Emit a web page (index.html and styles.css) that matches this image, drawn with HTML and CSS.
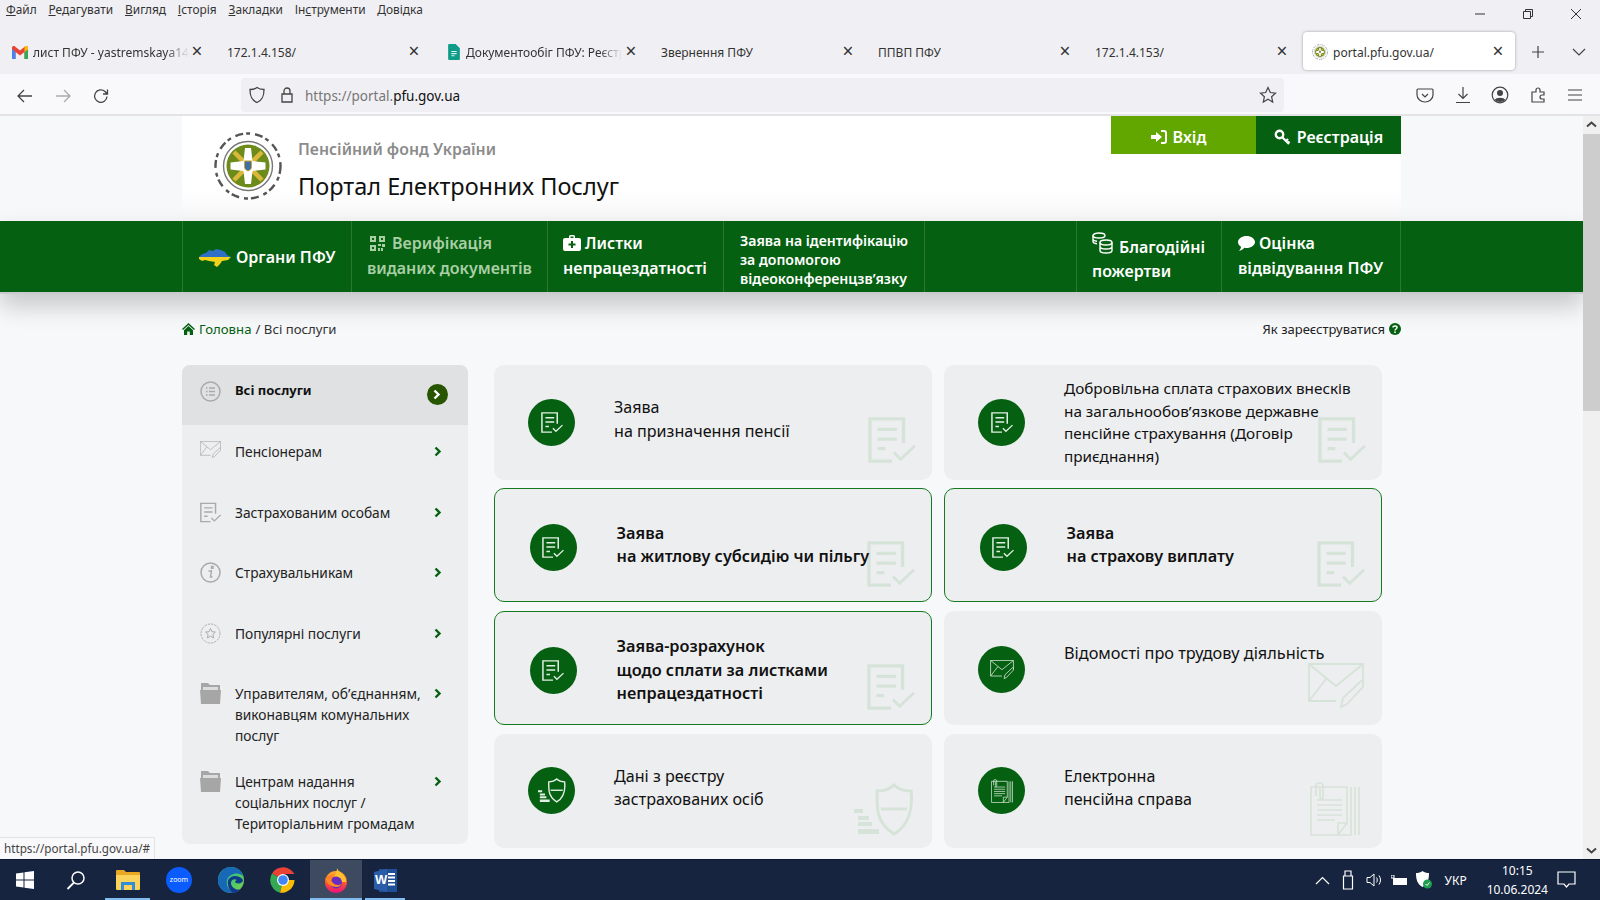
FILE: index.html
```html
<!DOCTYPE html>
<html lang="uk">
<head>
<meta charset="utf-8">
<title>Портал Електронних Послуг</title>
<link rel="stylesheet" href="styles.css">
</head>
<body>
<svg class="defs" width="0" height="0" aria-hidden="true">
  <defs>
    <symbol id="i-doc" viewBox="0 0 50 48"><g fill="none" stroke="currentColor" stroke-width="3.4"><path d="M37 27V2H2v44h23"/><path d="M10 13h20M10 23h20M10 33h8"/><path d="M27 37l7 7 15-14" stroke-width="3"/></g></symbol>
    <symbol id="i-mail" viewBox="0 0 56 45"><g fill="none" stroke="currentColor" stroke-width="1.8"><path d="M28 38H1V1h54v22"/><path d="M1 1l27 22L55 1M1 38l17-22"/><path d="M33 44l2-9 17-16c2-2 4-1 4 1s0 3-1 4L39 41z"/></g></symbol>
    <symbol id="i-shield" viewBox="0 0 60 53"><g fill="none" stroke="currentColor"><path d="M40 2c4 4 10 6 17 6 2 17-2 34-17 43-8-5-14-12-16-22-1-6-1-14-1-21 7 0 13-2 17-6z" stroke-width="3"/><path d="M27 26h26" stroke-width="3"/></g><path d="M0 26h9v4H0zM4 33h11v4H4zM4 39h14v4H4zM4 46h21v5H4z" fill="currentColor"/></symbol>
    <symbol id="i-file" viewBox="0 0 50 54"><g fill="none" stroke="currentColor" stroke-width="1.6"><path d="M1 5h36v36L28 53H1z"/><path d="M28 53V41h9M41 5v48H28M45 5v48M49 5v48"/><path d="M7 18h25M7 23h25M7 28h25M7 33h25M7 38h18"/><path d="M6 14V4c0-4 7-4 7 0v11c0 3-3 3-3 0V6"/></g></symbol>
    <symbol id="i-logo" viewBox="0 0 70 70">
      <circle cx="35" cy="35" r="32.500" fill="none" stroke="#555" stroke-width="2.400" stroke-dasharray="8 3 4 5"/>
      <circle cx="35" cy="35" r="24.500" fill="#fff" stroke="#777" stroke-width="1.400"/>
      <circle cx="35" cy="35" r="21.500" fill="#6c8b1b"/>
      <path d="M21 21l28 28M49 21L21 49" stroke="#dcb83a" stroke-width="4.500"/>
      <path d="M32 17h6l1.500 13 13 1.500v7L39.500 40 38 53h-6l-1.500-13-13-1.500v-7l13-1.500z" fill="#fff"/>
      <path d="M31.500 30h7v6c0 2-1.500 3-3.500 4-2-1-3.500-2-3.500-4z" fill="#3f6fa8" stroke="#c9a528"/>
    </symbol>
  </defs>
</svg>
<div class="window">
  <div class="menubar">
    <nav class="menu">
      <span><u>Ф</u>айл</span><span><u>Р</u>едагувати</span><span><u>В</u>игляд</span><span><u>І</u>сторія</span><span><u>З</u>акладки</span><span>Ін<u>с</u>трументи</span><span><u>Д</u>овідка</span>
    </nav>
    <div class="winctl">
      <svg width="12" height="12" viewBox="0 0 12 12"><path d="M1 6h10" stroke="#333" fill="none"/></svg>
      <svg width="12" height="12" viewBox="0 0 12 12"><path d="M1.500 3.500h7v7h-7zM3.500 3.500v-2h7v7h-2" stroke="#333" fill="none"/></svg>
      <svg width="12" height="12" viewBox="0 0 12 12"><path d="M1 1l10 10M11 1L1 11" stroke="#333" fill="none"/></svg>
    </div>
  </div>
  <div class="tabbar">
    <div class="tab">
      <svg class="fav" width="16" height="13" viewBox="0 0 16 13"><path d="M0 2v11h3.500V6L8 9.500 12.500 6v7H16V2c0-2-2-2.500-3-1.500L8 4.500 3 .5C2-.5 0 0 0 2z" fill="#ea4335"/><path d="M0 3v10h3.500V6z" fill="#4285f4"/><path d="M16 3v10h-3.500V6z" fill="#34a853"/><path d="M16 2c0-2-2-2.500-3-1.500L12.500 1v5L16 3.500z" fill="#fbbc04"/></svg>
      <span class="tab-t tab-t-icon1">лист ПФУ - yastremskaya14(</span><i class="x">×</i>
    </div>
    <div class="tab"><span class="tab-t">172.1.4.158/</span><i class="x">×</i></div>
    <div class="tab">
      <svg class="fav fav3" width="12" height="16" viewBox="0 0 11 15"><path d="M1 0h6l4 4v10a1 1 0 0 1-1 1H1a1 1 0 0 1-1-1V1a1 1 0 0 1 1-1z" fill="#0f9d8a"/><path d="M3 7h5M3 9h5M3 11h3" stroke="#d9f2ee"/></svg>
      <span class="tab-t tab-t-icon3">Документообіг ПФУ: Реєстр</span><i class="x">×</i>
    </div>
    <div class="tab"><span class="tab-t">Звернення ПФУ</span><i class="x">×</i></div>
    <div class="tab"><span class="tab-t">ППВП ПФУ</span><i class="x">×</i></div>
    <div class="tab"><span class="tab-t">172.1.4.153/</span><i class="x">×</i></div>
    <div class="tab tab-on">
      <svg class="fav" width="16" height="16"><use href="#i-logo"/></svg>
      <span class="tab-t">portal.pfu.gov.ua/</span><i class="x">×</i>
    </div>
    <svg class="tb-plus" width="14" height="14" viewBox="0 0 14 14"><path d="M7 1v12M1 7h12" stroke="#444" stroke-width="1.200" fill="none"/></svg>
    <svg class="tb-chev" width="14" height="14" viewBox="0 0 14 14"><path d="M1 4l6 6 6-6" stroke="#444" stroke-width="1.200" fill="none"/></svg>
  </div>
  <div class="toolbar">
    <div class="nav-btns">
      <svg width="18" height="18" viewBox="0 0 18 18"><path d="M16 9H2M8 3L2 9l6 6" stroke="#444" stroke-width="1.300" fill="none"/></svg>
      <svg width="18" height="18" viewBox="0 0 18 18"><path d="M2 9h14M10 3l6 6-6 6" stroke="#aaa" stroke-width="1.300" fill="none"/></svg>
      <svg width="18" height="18" viewBox="0 0 18 18"><path d="M15 9.500A6.200 6.200 0 1 1 13 4.500L15.500 7M15.500 2.500V7H11" stroke="#444" stroke-width="1.300" fill="none"/></svg>
    </div>
    <div class="urlbar">
      <svg width="18" height="18" viewBox="0 0 18 18"><path d="M9 1.500c2 1.500 4.500 2 7 2 0 6-1 10.500-7 13-6-2.500-7-7-7-13 2.500 0 5-.5 7-2z" stroke="#444" stroke-width="1.300" fill="none"/></svg>
      <svg width="16" height="18" viewBox="0 0 16 18"><path d="M3 8h10v8H3zM5 8V5a3 3 0 0 1 6 0v3" stroke="#444" stroke-width="1.300" fill="none"/></svg>
      <span class="url"><span class="url-dim">https://portal.</span>pfu.gov.ua</span>
      <svg class="star" width="18" height="18" viewBox="0 0 18 18"><path d="M9 1.500l2.300 5 5.200.6-3.900 3.600 1.100 5.300L9 13.300 4.300 16l1.100-5.300L1.500 7.100l5.200-.6z" stroke="#444" stroke-width="1.200" fill="none"/></svg>
    </div>
    <div class="tool-icons">
      <svg width="18" height="18" viewBox="0 0 18 18"><path d="M2 3h14a1 1 0 0 1 1 1v5c0 4-4 7-8 7s-8-3-8-7V4a1 1 0 0 1 1-1zM6 8l3 3 3-3" stroke="#444" stroke-width="1.200" fill="none"/></svg>
      <svg width="18" height="18" viewBox="0 0 18 18"><path d="M9 1v11M4.500 8L9 12.500 13.500 8M2 16.500h14" stroke="#444" stroke-width="1.200" fill="none"/></svg>
      <svg width="18" height="18" viewBox="0 0 18 18"><circle cx="9" cy="9" r="7.800" stroke="#444" stroke-width="1.200" fill="none"/><circle cx="9" cy="7" r="3" fill="#444"/><path d="M3.800 14c1-3 9.400-3 10.400 0-3 2.500-7.400 2.500-10.400 0z" fill="#444"/></svg>
      <svg width="18" height="18" viewBox="0 0 18 18"><path d="M3 16V6h4V4a2 2 0 0 1 4 0v2h4v3h-2a2 2 0 0 0 0 4h2v3z" stroke="#444" stroke-width="1.200" fill="none"/></svg>
      <svg width="18" height="18" viewBox="0 0 18 18"><path d="M2 4h14M2 9h14M2 14h14" stroke="#444" stroke-width="1.200" fill="none"/></svg>
    </div>
  </div>
  <div class="viewport">
    <main class="page">
      <header class="site">
        <div class="brand">
          <svg class="logo" width="70" height="70"><use href="#i-logo"/></svg>
          <div class="brand-t">
            <div class="brand-sub">Пенсійний фонд України</div>
            <div class="brand-main">Портал Електронних Послуг</div>
          </div>
        </div>
        <div class="auth">
          <a class="auth-in">
            <svg width="16" height="16" viewBox="0 0 16 16"><path d="M0 6h5V3l6 5-6 5v-3H0zM10 1h3a3 3 0 0 1 3 3v8a3 3 0 0 1-3 3h-3v-2h3a1 1 0 0 0 1-1V4a1 1 0 0 0-1-1h-3z" fill="#fff"/></svg>
            Вхід</a>
          <a class="auth-reg">
            <svg width="17" height="17" viewBox="0 0 17 17"><circle cx="5.500" cy="5.500" r="3.700" stroke="#fff" stroke-width="2.400" fill="none"/><path d="M8 8l7 7M12 12l2-2M14 14l1.500-1.500" stroke="#fff" stroke-width="2.200" fill="none"/></svg>
            Реєстрація</a>
        </div>
      </header>
      <div class="navband">
        <nav class="mainnav">
          <a class="ni ni-org">
            <svg width="32" height="21" viewBox="0 0 32 21"><path d="M0 10c2-2 4-4 7-4l3-3 4 1 3-2 5 1 4 2 2 3 4 2H0z" fill="#2f6fc6"/><path d="M0 10h32l-3 3-6 1-2 3-3 3-3-2 1-3-6-1-4-1-3 1-3-2z" fill="#f2d21a"/></svg>
            <span>Органи ПФУ</span>
          </a>
          <a class="ni ni-ver">
            <span class="ln"><svg width="15" height="15" viewBox="0 0 15 15"><path d="M0 0h6v6H0zM9 0h6v6H9zM0 9h6v6H0zM2 2v2h2V2zM11 2v2h2V2zM2 11v2h2v-2zM8 8h3v2H8zM12 8h3v3h-3zM8 12h2v3H8zM11 12h2v3h-2z" fill="#a9cfa5" fill-rule="evenodd"/></svg><b>Верифікація</b></span>
            <span class="ln">виданих документів</span>
          </a>
          <a class="ni ni-lis">
            <span class="ln"><svg width="18" height="16" viewBox="0 0 18 16"><path d="M6 3V1.500A1.500 1.500 0 0 1 7.500 0h3A1.500 1.500 0 0 1 12 1.500V3h4a2 2 0 0 1 2 2v9a2 2 0 0 1-2 2H2a2 2 0 0 1-2-2V5a2 2 0 0 1 2-2zM7.500 1.500V3h3V1.500zM8 6v2.500H5.500v2H8V13h2v-2.500h2.500v-2H10V6z" fill="#fff" fill-rule="evenodd"/></svg>Листки</span>
            <span class="ln">непрацездатності</span>
          </a>
          <a class="ni ni-id">Заява на ідентифікацію<br>за допомогою<br>відеоконференцзв’язку</a>
          <div class="ni ni-blank"></div>
          <a class="ni ni-don">
            <span class="ln ln-coin"><svg width="21" height="22" viewBox="0 0 21 22"><g fill="none" stroke="#fff" stroke-width="1.400"><ellipse cx="7" cy="3.500" rx="6" ry="2.500"/><path d="M1 3.500v6c0 1 1.500 2 4 2.300M1 7c0 1 1.500 2 4 2.300"/><ellipse cx="14" cy="10.500" rx="6" ry="2.500"/><path d="M8 10.500v8c0 1.500 2.500 2.500 6 2.500s6-1 6-2.500v-8M8 14.500c0 1.500 2.500 2.500 6 2.500s6-1 6-2.500"/></g></svg><span>Благодійні</span></span>
            <span class="ln">пожертви</span>
          </a>
          <a class="ni ni-rate">
            <span class="ln"><svg width="17" height="15" viewBox="0 0 17 15"><path d="M8.500 0C13 0 17 2.700 17 6s-4 6-8.500 6c-.8 0-1.500-.1-2.200-.2C5 13.500 3 14.500 1 15c1-1 2-2.500 2-4.200C1.200 9.700 0 8 0 6c0-3.300 4-6 8.500-6z" fill="#fff"/></svg>Оцінка</span>
            <span class="ln">відвідування ПФУ</span>
          </a>
        </nav>
      </div>
      <div class="content">
        <div class="crumbs">
          <div class="crumb-l">
            <svg width="13" height="12" viewBox="0 0 13 12"><path d="M6.500 0L13 6l-1 1-5.500-5L1 7 0 6zM2 7.200L6.500 3 11 7.200V12H7.800V8.500H5.200V12H2z" fill="#056011"/></svg>
            <a class="crumb-a">Головна</a> / Всі послуги
          </div>
          <div class="crumb-r">Як зареєструватися
            <svg width="12" height="12" viewBox="0 0 12 12"><circle cx="6" cy="6" r="6" fill="#056011"/><path d="M4 4.600C4 2.500 8 2.500 8 4.600 8 6 6 6 6 7.500" stroke="#fff" stroke-width="1.500" fill="none"/><path d="M5.200 8.500h1.600V10H5.200z" fill="#fff"/></svg>
          </div>
        </div>
        <div class="columns">
          <aside class="side">
            <a class="si si-on">
              <svg class="si-ic" width="21" height="21" viewBox="0 0 21 21"><circle cx="10.500" cy="10.500" r="9.500" stroke="#aaa" stroke-width="1.500" fill="none"/><path d="M9 7h6M9 10.500h6M9 14h6M6 7h1.500M6 10.500h1.500M6 14h1.500" stroke="#aaa" stroke-width="1.300"/></svg>
              <span class="si-t si-t-b">Всі послуги</span>
              <span class="si-round"><svg width="9" height="11" viewBox="0 0 9 11"><path d="M1.500 1.500l4 4-4 4" stroke="#fff" stroke-width="2.400" fill="none"/></svg></span>
            </a>
            <a class="si">
              <svg class="si-ic" width="21" height="17" viewBox="0 0 56 45"><use href="#i-mail"/></svg>
              <span class="si-t">Пенсіонерам</span>
              <svg class="si-ar" width="8" height="11" viewBox="0 0 8 11"><path d="M1.500 1.500l4 4-4 4" stroke="#056011" stroke-width="2.400" fill="none"/></svg>
            </a>
            <a class="si">
              <svg class="si-ic" width="21" height="21" viewBox="0 0 50 48"><use href="#i-doc"/></svg>
              <span class="si-t">Застрахованим особам</span>
              <svg class="si-ar" width="8" height="11" viewBox="0 0 8 11"><path d="M1.500 1.500l4 4-4 4" stroke="#056011" stroke-width="2.400" fill="none"/></svg>
            </a>
            <a class="si">
              <svg class="si-ic" width="21" height="21" viewBox="0 0 21 21"><circle cx="10.500" cy="10.500" r="9.500" stroke="#aaa" stroke-width="1.500" fill="none"/><path d="M11.500 4.500h1.500V6.200h-1.500zM8.500 9h3l-1 6h2" stroke="#aaa" stroke-width="1.400" fill="none"/></svg>
              <span class="si-t">Страхувальникам</span>
              <svg class="si-ar" width="8" height="11" viewBox="0 0 8 11"><path d="M1.500 1.500l4 4-4 4" stroke="#056011" stroke-width="2.400" fill="none"/></svg>
            </a>
            <a class="si">
              <svg class="si-ic" width="21" height="21" viewBox="0 0 21 21"><circle cx="10.500" cy="10.500" r="9.500" stroke="#aaa" stroke-dasharray="2 1" fill="none"/><path d="M10.500 5.500l1.500 3.200 3.400.4-2.500 2.400.7 3.400-3.100-1.700-3.100 1.700.7-3.400-2.500-2.400 3.400-.4z" stroke="#aaa" fill="none"/></svg>
              <span class="si-t">Популярні послуги</span>
              <svg class="si-ar" width="8" height="11" viewBox="0 0 8 11"><path d="M1.500 1.500l4 4-4 4" stroke="#056011" stroke-width="2.400" fill="none"/></svg>
            </a>
            <a class="si si-tall">
              <svg class="si-ic" width="21" height="21" viewBox="0 0 21 21"><path d="M1 0h7l2 2h10v5H1z" fill="#a6a6a6"/><path d="M3 4h15v3H3z" fill="#ddd"/><path d="M0 7h21l-1 14H1z" fill="#a6a6a6"/></svg>
              <span class="si-t">Управителям, об’єднанням,<br>виконавцям комунальних<br>послуг</span>
              <svg class="si-ar" width="8" height="11" viewBox="0 0 8 11"><path d="M1.500 1.500l4 4-4 4" stroke="#056011" stroke-width="2.400" fill="none"/></svg>
            </a>
            <a class="si si-tall">
              <svg class="si-ic" width="21" height="21" viewBox="0 0 21 21"><path d="M1 0h7l2 2h10v5H1z" fill="#a6a6a6"/><path d="M3 4h15v3H3z" fill="#ddd"/><path d="M0 7h21l-1 14H1z" fill="#a6a6a6"/></svg>
              <span class="si-t">Центрам надання<br>соціальних послуг /<br>Територіальним громадам</span>
              <svg class="si-ar" width="8" height="11" viewBox="0 0 8 11"><path d="M1.500 1.500l4 4-4 4" stroke="#056011" stroke-width="2.400" fill="none"/></svg>
            </a>
          </aside>
          <section class="cards">
            <a class="card">
              <span class="disc"><svg width="22" height="21"><use href="#i-doc"/></svg></span>
              <span class="card-t card-t-up">Заява<br>на призначення пенсії</span>
              <svg class="mark mark-doc"><use href="#i-doc"/></svg>
            </a>
            <a class="card">
              <span class="disc"><svg width="22" height="21"><use href="#i-doc"/></svg></span>
              <span class="card-t card-t-long">Добровільна сплата страхових внесків<br>на загальнообов’язкове державне<br>пенсійне страхування (Договір<br>приєднання)</span>
              <svg class="mark mark-doc"><use href="#i-doc"/></svg>
            </a>
            <a class="card card-hi">
              <span class="disc"><svg width="22" height="21"><use href="#i-doc"/></svg></span>
              <span class="card-t">Заява<br>на житлову субсидію чи пільгу</span>
              <svg class="mark mark-doc"><use href="#i-doc"/></svg>
            </a>
            <a class="card card-hi">
              <span class="disc"><svg width="22" height="21"><use href="#i-doc"/></svg></span>
              <span class="card-t">Заява<br>на страхову виплату</span>
              <svg class="mark mark-doc"><use href="#i-doc"/></svg>
            </a>
            <a class="card card-hi">
              <span class="disc"><svg width="22" height="21"><use href="#i-doc"/></svg></span>
              <span class="card-t card-t-low">Заява-розрахунок<br>щодо сплати за листками<br>непрацездатності</span>
              <svg class="mark mark-doc"><use href="#i-doc"/></svg>
            </a>
            <a class="card">
              <span class="disc disc-low"><svg width="24" height="19"><use href="#i-mail"/></svg></span>
              <span class="card-t card-t-mail">Відомості про трудову діяльність<br>&nbsp;</span>
              <svg class="mark mark-mail"><use href="#i-mail"/></svg>
            </a>
            <a class="card">
              <span class="disc"><svg width="28" height="25"><use href="#i-shield"/></svg></span>
              <span class="card-t card-t-up">Дані з реєстру<br>застрахованих осіб</span>
              <svg class="mark mark-shield"><use href="#i-shield"/></svg>
            </a>
            <a class="card">
              <span class="disc"><svg width="22" height="24"><use href="#i-file"/></svg></span>
              <span class="card-t card-t-up">Електронна<br>пенсійна справа</span>
              <svg class="mark mark-file"><use href="#i-file"/></svg>
            </a>
          </section>
        </div>
      </div>
    </main>
    <div class="scrollbar">
      <svg width="17" height="17" viewBox="0 0 17 17"><path d="M4 10.500l4.500-4 4.500 4" stroke="#444" stroke-width="2" fill="none"/></svg>
      <div class="sb-track"><div class="sb-thumb"></div></div>
      <svg width="17" height="17" viewBox="0 0 17 17"><path d="M4 6.500l4.500 4 4.500-4" stroke="#444" stroke-width="2" fill="none"/></svg>
    </div>
    <div class="status">https://portal.pfu.gov.ua/#</div>
  </div>
  <footer class="taskbar">
    <div class="tk tk-win"><svg width="18" height="18" viewBox="0 0 18 18"><path d="M0 2.500l7.500-1V8.500H0zM8.500 1.300L18 0v8.500H8.500zM0 9.500h7.500v7l-7.500-1zM8.500 9.500H18V18l-9.500-1.300z" fill="#fff"/></svg></div>
    <div class="tk tk-search"><svg width="20" height="20" viewBox="0 0 20 20"><circle cx="12" cy="8" r="6" stroke="#fff" stroke-width="1.500" fill="none"/><path d="M8 12.500L1.500 19" stroke="#fff" stroke-width="1.800"/></svg></div>
    <div class="tk tk-run tk-ex"><svg width="24" height="20" viewBox="0 0 24 20"><path d="M0 1a1 1 0 0 1 1-1h7l2 2h13a1 1 0 0 1 1 1v3H0z" fill="#e8a824"/><path d="M0 5h24v14a1 1 0 0 1-1 1H1a1 1 0 0 1-1-1z" fill="#fbd25c"/><path d="M5 12h14v8h-3v-5H8v5H5z" fill="#2f8ed6"/></svg></div>
    <div class="tk tk-zoom"><span class="zoomdot">zoom</span></div>
    <div class="tk tk-edge"><svg width="26" height="26" viewBox="0 0 26 26"><defs><linearGradient id="eg" x1="0" y1="0" x2="1" y2="1"><stop offset="0" stop-color="#3fc0b0"/><stop offset=".5" stop-color="#41c56f"/><stop offset="1" stop-color="#7fd34a"/></linearGradient></defs><circle cx="13" cy="13" r="13" fill="url(#eg)"/><path d="M0 14C0 6 6 0 13 0c6 0 11 4 12 9-2-2-6-3-9-2-5 1-8 5-7 10 0 3 3 7 7 9h-3C6 26 0 21 0 14z" fill="#1769b8"/><path d="M10 17c-1-5 3-8 7-8 3 0 6 1 8 4 0 3-4 4-7 3-2-1 0-3 1-3-3-2-6 0-6 3 0 4 5 8 10 6-2 2-5 4-8 4-3-2-5-5-5-9z" fill="#123a8a"/></svg></div>
    <div class="tk tk-chrome"><svg width="26" height="26" viewBox="0 0 26 26"><path d="M13 13L2 6.500A13 13 0 0 1 24.500 7H13z" fill="#ea4335"/><path d="M13 13L2 6.500A13 13 0 0 0 10 25.700z" fill="#34a853"/><path d="M13 13h11.500A13 13 0 0 1 10 25.700z" fill="#fbbc04"/><circle cx="13" cy="13" r="6" fill="#fff"/><circle cx="13" cy="13" r="4.800" fill="#4285f4"/></svg></div>
    <div class="tk tk-run tk-ff tk-act"><svg width="24" height="25" viewBox="0 0 24 25"><defs><linearGradient id="fg" x1="0" y1="0" x2="0" y2="1"><stop offset="0" stop-color="#ffb02e"/><stop offset=".5" stop-color="#ff5a2a"/><stop offset="1" stop-color="#e9127e"/></linearGradient></defs><circle cx="12" cy="14" r="11" fill="url(#fg)"/><path d="M13 0c1 4 6 5 8 9 1 2 1 4 1 5H8c1-5 5-8 5-14z" fill="#ffc12e"/><circle cx="12" cy="14.500" r="6" fill="#6a2bc0"/><path d="M1.500 10c1 6 6 9 11 9 2 0 4-1 5-3-3 2-8 1-10-3 0-1 0-2 1-3-2 0-4 1-7 0z" fill="#ff8a1f"/></svg></div>
    <div class="tk tk-run tk-wd"><svg width="23" height="23" viewBox="0 0 23 23"><path d="M5 0h18v23H5z" fill="#1f4f96"/><path d="M14 5h7M14 8.500h7M14 12h7M14 15.500h7" stroke="#fff" stroke-width="1.800"/><path d="M0 3l13-3v23L0 20z" fill="#2b5ca8"/></svg><span class="wd-w">W</span></div>
    <div class="tray">
      <svg width="15" height="9" viewBox="0 0 15 9"><path d="M1 8l6.500-6.500L14 8" stroke="#fff" stroke-width="1.200" fill="none"/></svg>
      <svg width="12" height="20" viewBox="0 0 12 20"><path d="M3 1h6v5H3zM1.500 6h9v13h-9z" stroke="#fff" stroke-width="1.200" fill="none"/></svg>
      <svg width="16" height="14" viewBox="0 0 16 14"><path d="M1 4.500h3L8 1v12L4 9.500H1zM10.500 4.500c1 1.500 1 3.500 0 5M13 2.500c2 3 2 6 0 9" stroke="#fff" fill="none"/></svg>
      <svg class="batt" width="17" height="11" viewBox="0 0 17 11"><path d="M2 3h14v7H2z" fill="#fff"/><path d="M0 0h3v3H0z" fill="none" stroke="#fff"/></svg>
      <svg width="17" height="18" viewBox="0 0 17 18"><path d="M7.500 0c2 1.500 4 2 6.500 2 0 6-1 11-6.500 14C2 13 1 8 1 2c2.500 0 4.500-.5 6.500-2z" fill="#fff"/><circle cx="12.500" cy="13" r="4.500" fill="#1e9e50"/><path d="M10.500 13l1.500 1.500 2.500-3" stroke="#fff" fill="none"/></svg>
      <span class="tray-lang">УКР</span>
      <span class="clock"><span>10:15</span><span>10.06.2024</span></span>
      <svg class="bell" width="19" height="18" viewBox="0 0 19 18"><path d="M1 1h17v12h-6l-2.500 3L7 13H1z" stroke="#fff" stroke-width="1.200" fill="none"/></svg>
    </div>
  </footer>
</div>
</body>
</html>
```
FILE: styles.css
```css
* { box-sizing: border-box; }
html, body { margin: 0; height: 100%; overflow: hidden; }
body { font-family: "Noto Sans", "Open Sans", sans-serif; color: #111; }
a { color: inherit; text-decoration: none; }
.defs { position: absolute; }

.window { width: 1600px; height: 900px; display: flex; flex-direction: column; overflow: hidden; }

/* browser chrome */
.menubar { height: 32px; background: #f0f0f4; display: flex; justify-content: space-between; flex: none; }
.menu { display: flex; gap: 11.800px; padding: 1px 0 0 6px; font-size: 11.900px; color: #333; line-height: 16px; }
.winctl { display: flex; gap: 36px; padding: 8px 18px 0 0; }

.tabbar { height: 42px; background: #f0f0f4; display: flex; flex: none; align-items: flex-start; }
.tab { width: 217px; height: 38px; padding: 2px 0 0 10px; display: flex; align-items: center; position: relative; font-size: 12px; color: #333; flex: none; }
.tab-t { white-space: nowrap; overflow: hidden; }
.tab-t-icon1 { width: 156px; margin-left: 5px; -webkit-mask-image: linear-gradient(90deg, #000 85%, transparent); mask-image: linear-gradient(90deg, #000 85%, transparent); }
.tab-t-icon3 { width: 156px; margin-left: 6px; -webkit-mask-image: linear-gradient(90deg, #000 85%, transparent); mask-image: linear-gradient(90deg, #000 85%, transparent); }
.fav { flex: none; margin-left: 2px; }
.fav3 { margin-left: 4px; }
.x { position: absolute; left: 190px; top: 9px; width: 14px; text-align: center; font-style: normal; font-size: 19px; line-height: 21px; color: #333; }
.tab-on { width: 212px; background: #fff; border-radius: 4px; box-shadow: 0 0 3px rgba(0,0,0,.35); padding-left: 7px; gap: 5px; margin-left: 1px; }
.tab-on .x { left: 188px; }
.tb-plus { margin: 13px 0 0 16px; }
.tb-chev { margin: 13px 0 0 27px; }

.toolbar { height: 42px; background: #f9f9fb; border-bottom: 2px solid #e3e3e6; display: flex; align-items: flex-start; flex: none; }
.nav-btns { display: flex; gap: 20px; padding: 13px 0 0 16px; width: 241px; }
.urlbar { width: 1043px; height: 34px; margin-top: 4px; background: #f0f0f4; border-radius: 4px; display: flex; align-items: center; padding: 0 7px 0 7px; gap: 13px; }
.url { font-size: 13.500px; color: #111; flex: 1; margin-left: -3px; padding-top: 2px; }
.url-dim { color: #777; }
.tool-icons { display: flex; gap: 19.500px; padding: 12px 0 0 132px; }

/* page */
.viewport { flex: 1; display: flex; position: relative; min-height: 0; }
.page { flex: 1; background: #f7f8fa; overflow: hidden; min-width: 0; }

.site { width: 1219px; height: 105px; margin: 0 auto; background: linear-gradient(#fff 70%, #f6f6f6); display: flex; justify-content: space-between; }
.brand { display: flex; padding: 15px 0 0 31px; }
.logo { flex: none; }
.brand-t { margin-left: 15px; }
.brand-sub { font-size: 15.800px; font-weight: 600; color: #8b8b8b; line-height: 22px; margin-top: 7px; }
.brand-main { font-size: 23.500px; color: #111; line-height: 32px; margin-top: 10px; }
.auth { display: flex; height: 38px; }
.auth a { display: flex; align-items: center; justify-content: center; gap: 6px; width: 145px; color: #fff; font-weight: 600; font-size: 16px; padding-top: 4px; }
.auth-in { background: #62a600; padding-right: 10px; }
.auth-reg { background: #056011; }

.navband { background: #056011; height: 73px; border-bottom: 2px solid #c9cbcc; box-shadow: 0 12px 24px rgba(0,0,0,.2); position: relative; }
.mainnav { width: 1219px; height: 71px; margin: 0 auto; display: flex; border-right: 1px solid #2a7633; color: #fff; font-weight: 600; font-size: 16px; }
.ni { border-left: 1px solid #2a7633; padding-left: 15px; display: flex; flex-direction: column; justify-content: center; flex: none; line-height: 25px; white-space: nowrap; }
.ln { display: flex; align-items: center; gap: 4px; }
.ni-org { width: 169px; flex-direction: row; align-items: center; justify-content: flex-start; gap: 5px; padding: 1px 0 0 16px; }
.ni-ver { width: 196px; color: #a9cfa5; padding-bottom: 2px; }
.ni-ver .ln svg { margin-left: 3px; }
.ni-ver b { font-weight: 600; margin-left: 3px; }
.ni-lis { width: 176px; padding-bottom: 2px; }
.ni-id { width: 201px; font-size: 14.100px; line-height: 19px; padding: 5px 0 0 16px; }
.ni-blank { width: 152px; }
.ni-don { width: 145px; line-height: 24px; padding-top: 5px; }
.ln-coin { gap: 6px; }
.ln-coin svg { margin-top: -8px; }
.ni-rate { width: 179px; padding: 0 0 2px 16px; }

.content { width: 1219px; margin: 0 auto; }
.crumbs { display: flex; justify-content: space-between; height: 71px; align-items: center; font-size: 13.200px; padding-bottom: 2px; }
.crumb-l { display: flex; align-items: center; gap: 4px; color: #333; }
.crumb-a { color: #056011; }
.crumb-r { display: flex; align-items: center; gap: 4px; color: #222; font-size: 13px; }

.columns { display: flex; gap: 26px; }
.side { width: 286px; height: 479px; background: #edeef0; border-radius: 8px; overflow: hidden; flex: none; }
.si { display: flex; align-items: flex-start; height: 60.500px; padding: 16px 26px 0 18px; color: #222; font-size: 13.750px; line-height: 21px; }
.si-on { background: #e0e1e3; height: 60px; }
.si-tall { height: 88px; }
.si-ic { flex: none; color: #a9a9a9; margin-right: 14px; }
.si-t { flex: 1; min-width: 0; white-space: nowrap; }
.si-t-b { font-weight: 700; font-size: 13px; color: #111; line-height: 18px; }
.si-ar { flex: none; margin: 5px 0 0 -20px; }
.si-round { width: 21px; height: 21px; border-radius: 50%; background: #275500; flex: none; display: flex; align-items: center; justify-content: center; margin: 3px -6px 0 0; }

.cards { width: 888px; display: grid; grid-template-columns: 438px 438px; column-gap: 12px; grid-auto-rows: 114.500px; row-gap: 8.400px; }
.card { background: #edeef0; border-radius: 10px; display: flex; align-items: center; padding-left: 34px; position: relative; font-size: 16.100px; line-height: 23.500px; color: #111; }
.card-hi { border: 1.500px solid #157a1f; font-weight: 600; padding-left: 34.500px; font-size: 16.300px; }
.card-hi .disc { margin-top: 5px; }
.card-hi .card-t { margin-left: 40px; }
.card-hi .mark-doc { bottom: 13px; }
.disc { width: 47px; height: 47px; border-radius: 50%; background: #056011; flex: none; display: flex; align-items: center; justify-content: center; color: #e4efe5; }
.disc-low { margin-top: 3px; }
.card-t { margin-left: 39px; position: relative; z-index: 1; white-space: nowrap; }
.card-t-up { margin-top: -5px; }
.card-t-low { margin-top: 5px; }
.card-t-mail { margin-top: -6px; font-size: 16.300px; }
.card-t-long { line-height: 22.500px; font-size: 15.300px; }
.mark { position: absolute; color: #d6e3d8; }
.mark-doc { width: 48px; height: 48px; right: 16px; bottom: 16px; }
.mark-mail { width: 56px; height: 45px; right: 18px; bottom: 17px; }
.mark-shield { width: 60px; height: 53px; right: 18px; bottom: 12px; }
.mark-file { width: 50px; height: 54px; right: 22px; bottom: 12px; }

.scrollbar { width: 17px; background: #f0f0f0; display: flex; flex-direction: column; flex: none; }
.sb-track { flex: 1; min-height: 0; }
.sb-thumb { height: 277px; background: #cdcdcd; margin-top: 1px; }
.status { position: absolute; left: 0; bottom: 0; height: 22px; width: 155px; background: #f9f9fb; border: 1px solid #e3e3e6; border-width: 1px 1px 0 0; font-size: 11.700px; line-height: 21px; color: #444; padding-left: 4px; white-space: nowrap; }

/* taskbar */
.taskbar { height: 41px; background: #16243f; display: flex; align-items: center; flex: none; border-top: 1px solid #0d1830; }
.tk { height: 40px; display: flex; align-items: center; justify-content: center; flex: none; position: relative; }
.tk-win { width: 50px; }
.tk-search { width: 51px; }
.tk-ex { width: 51px; margin-left: 1px; }
.tk-zoom { width: 52px; }
.tk-edge { width: 52px; }
.tk-chrome { width: 51px; }
.tk-ff { width: 52px; margin-left: 2px; }
.tk-wd { width: 46px; }
.tk-act { background: #3e4a60; }
.tk-run::after { content: ""; position: absolute; left: 3px; right: 3px; bottom: 0; height: 2px; background: #7fbdf0; }
.tk-act::after { left: 0; right: 0; }
.zoomdot { width: 26px; height: 26px; border-radius: 50%; background: #0b5cff; color: #fff; font-size: 7px; line-height: 26px; text-align: center; }
.wd-w { position: absolute; left: 13px; top: 12px; color: #fff; font-family: "Liberation Sans", sans-serif; font-weight: 700; font-size: 13px; line-height: 16px; }
.tray { margin-left: auto; display: flex; align-items: center; color: #fff; font-size: 12px; gap: 12px; padding-right: 24px; }
.batt { margin: 0 -5px 0 -3px; }
.clock { display: flex; flex-direction: column; align-items: center; line-height: 19px; margin-left: 8px; }
.bell { margin-left: -3px; }
```
